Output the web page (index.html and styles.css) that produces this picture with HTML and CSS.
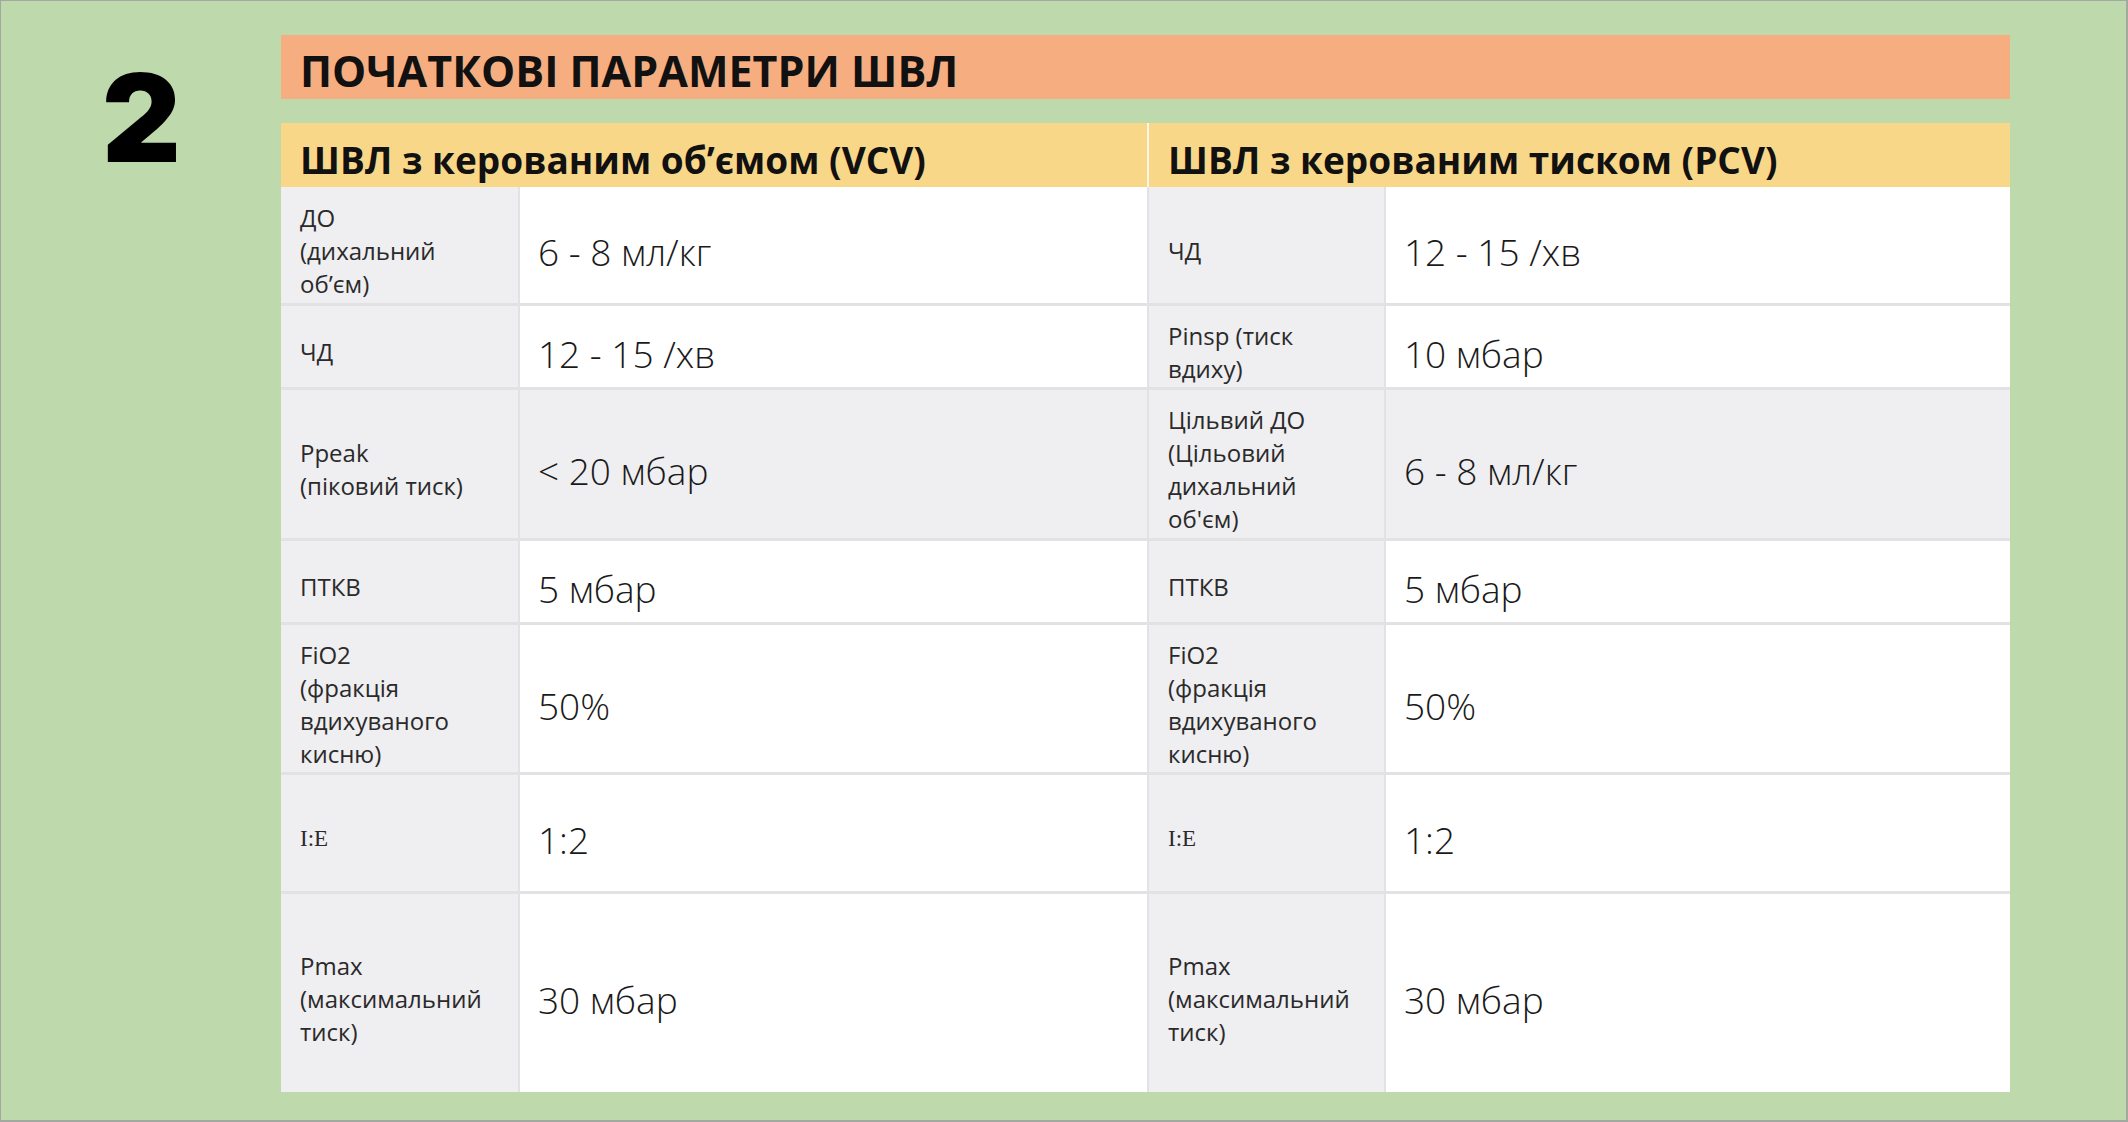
FILE: index.html
```html
<!DOCTYPE html>
<html lang="uk">
<head>
<meta charset="utf-8">
<title>Початкові параметри ШВЛ</title>
<link rel="stylesheet" href="styles.css">
</head>
<body>
<div class="slide">
  <div class="num-col"><div class="num">2</div></div>
  <div class="main">
    <div class="title">ПОЧАТКОВІ ПАРАМЕТРИ ШВЛ</div>
    <div class="thead">
      <div class="th th-left">ШВЛ з керованим об’ємом (VCV)</div>
      <div class="th th-right">ШВЛ з керованим тиском (PCV)</div>
    </div>
    <div class="tbody">
      <div class="cell label">ДО<br>(дихальний<br>об’єм)</div>
      <div class="cell value">6 - 8 мл/кг</div>
      <div class="cell label">ЧД</div>
      <div class="cell value">12 - 15 /хв</div>

      <div class="cell label">ЧД</div>
      <div class="cell value">12 - 15 /хв</div>
      <div class="cell label">Pinsp (тиск вдиху)</div>
      <div class="cell value">10 мбар</div>

      <div class="cell label shaded">Ppeak<br>(піковий тиск)</div>
      <div class="cell value shaded">&lt; 20 мбар</div>
      <div class="cell label shaded">Цільвий ДО<br>(Цільовий дихальний об'єм)</div>
      <div class="cell value shaded">6 - 8 мл/кг</div>

      <div class="cell label">ПТКВ</div>
      <div class="cell value">5 мбар</div>
      <div class="cell label">ПТКВ</div>
      <div class="cell value">5 мбар</div>

      <div class="cell label">FiO2<br>(фракція вдихуваного кисню)</div>
      <div class="cell value">50%</div>
      <div class="cell label">FiO2<br>(фракція вдихуваного кисню)</div>
      <div class="cell value">50%</div>

      <div class="cell label"><span class="ie">I:E</span></div>
      <div class="cell value">1:2</div>
      <div class="cell label"><span class="ie">I:E</span></div>
      <div class="cell value">1:2</div>

      <div class="cell label">Pmax<br>(максимальний тиск)</div>
      <div class="cell value">30 мбар</div>
      <div class="cell label">Pmax<br>(максимальний тиск)</div>
      <div class="cell value">30 мбар</div>
    </div>
  </div>
</div>
</body>
</html>
```

FILE: styles.css
```css
* { box-sizing: border-box; }

html, body {
  margin: 0;
  padding: 0;
}

body {
  font-family: "Open Sans", "Noto Sans", sans-serif;
  color: #222;
}

.slide {
  width: 2128px;
  height: 1122px;
  background: #bedaad;
  border-top: 1px solid #a2a9a0;
  border-left: 1px solid #a2a9a0;
  border-right: 2px solid #a2a9a0;
  border-bottom: 2px solid #a2a9a0;
  display: flex;
  align-items: flex-start;
}

.num-col {
  width: 280px;
  flex: none;
  padding-top: 56px;
  padding-left: 101px;
}

.num {
  font-family: "Inter", "Noto Sans", sans-serif;
  font-weight: 900;
  font-size: 122px;
  line-height: 1;
  color: #000;
}

.main {
  width: 1729px;
  flex: none;
  padding-top: 34px;
}

.title {
  height: 64px;
  background: #f6ae80;
  padding: 10px 19px 0;
  font-weight: 700;
  font-size: 43px;
  line-height: 52px;
  color: #111;
}

.thead {
  margin-top: 24px;
  display: grid;
  grid-template-columns: 866px 861px;
  column-gap: 2px;
  background: #fdf6e3;
}

.th {
  height: 64px;
  background: #f9d789;
  padding: 15px 19px 0;
  font-weight: 700;
  font-size: 37px;
  line-height: 44px;
  color: #111;
  white-space: nowrap;
}

.tbody {
  display: grid;
  grid-template-columns: 237px 627px 235px 624px;
  grid-template-rows: 116px 81px 148px 81px 147px 116px 198px;
  column-gap: 2px;
  row-gap: 3px;
  background: #e2e2e5;
}

.cell {
  display: flex;
  flex-direction: column;
  justify-content: center;
  padding: 10px 18px 0 19px;
}

.label {
  background: #efeef1;
  font-size: 24px;
  line-height: 33px;
  color: #2a2a2a;
}

.value {
  background: #fff;
  font-size: 37px;
  font-weight: 350;
  line-height: 44px;
  color: #1a1a1a;
  padding-left: 18px;
  padding-top: 14px;
}

.shaded {
  background: #efeef1;
}

.ie {
  font-family: "Liberation Serif", serif;
  font-size: 23px;
}
```
